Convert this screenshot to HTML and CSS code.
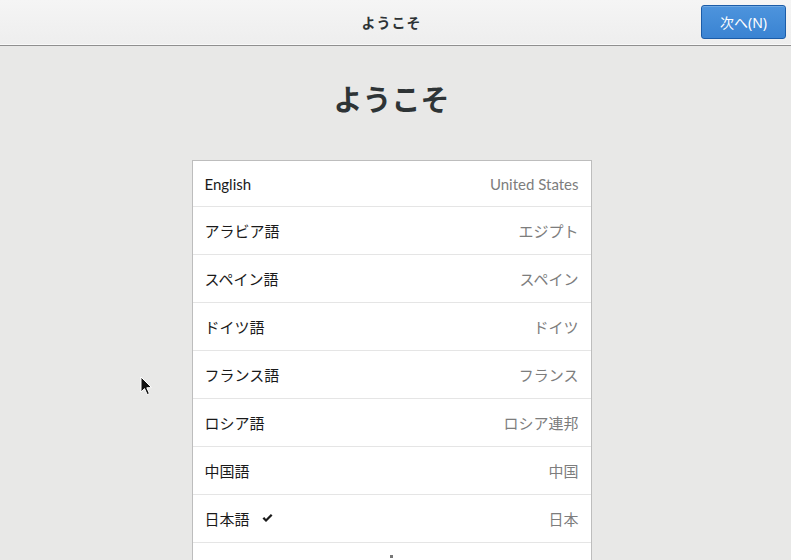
FILE: index.html
```html
<!DOCTYPE html>
<html lang="ja">
<head>
<meta charset="utf-8">
<link rel="stylesheet" href="styles.css">
</head>
<body>
<header class="topbar">
  <div class="topbar-title">ようこそ</div>
  <button class="next-btn">次へ(N)</button>
</header>
<main class="content">
  <h1 class="welcome">ようこそ</h1>
  <ul class="lang-list">
    <li class="row first"><span class="lang">English</span><span class="region">United States</span></li>
    <li class="row"><span class="lang">アラビア語</span><span class="region">エジプト</span></li>
    <li class="row"><span class="lang">スペイン語</span><span class="region">スペイン</span></li>
    <li class="row"><span class="lang">ドイツ語</span><span class="region">ドイツ</span></li>
    <li class="row"><span class="lang">フランス語</span><span class="region">フランス</span></li>
    <li class="row"><span class="lang">ロシア語</span><span class="region">ロシア連邦</span></li>
    <li class="row"><span class="lang">中国語</span><span class="region">中国</span></li>
    <li class="row"><span class="lang">日本語<svg class="check" width="11" height="9" viewBox="0 0 11 9"><path d="M0.5 4.6 L2.2 3 L4 4.9 L8.9 0 L10.5 1.6 L4 8 Z" fill="#1a1a1a"/></svg></span><span class="region">日本</span></li>
    <li class="row more"><span class="dot"></span></li>
  </ul>
</main>
<svg class="cursor" width="14" height="22" viewBox="0 0 14 22"><path d="M1 1 L1 16 L4.5 12.6 L7.2 18.6 L9.4 17.6 L6.8 11.8 L11.6 11.6 Z" fill="#111" stroke="#fff" stroke-width="1"/></svg>
</body>
</html>
```
FILE: styles.css
```css
html, body {
  margin: 0;
  padding: 0;
  height: 100%;
  overflow: hidden;
}
body {
  background: #e8e8e7;
  font-family: "Noto Sans", "Noto Sans CJK JP", sans-serif;
  color: #2e3436;
  position: relative;
}
.topbar {
  height: 44px;
  background: linear-gradient(#f5f5f5, #eeeeee);
  border-bottom: 1px solid #f9f9f9;
  box-shadow: 0 1px 0 #8f8f8f;
  display: flex;
  align-items: center;
  justify-content: center;
  padding-right: 8px;
  position: relative;
}
.topbar-title {
  font-weight: bold;
  font-size: 14px;
  letter-spacing: 1px;
  color: #2e3436;
}
.next-btn {
  position: absolute;
  right: 5px;
  top: 5px;
  width: 85px;
  height: 34px;
  border: 1px solid #1b5ca8;
  border-radius: 3px;
  background: linear-gradient(#4d94dd, #3a83d2);
  color: #ffffff;
  font-family: "Noto Sans", "Noto Sans CJK JP", sans-serif;
  font-size: 14px;
  padding: 0;
  box-shadow: inset 0 1px 0 rgba(255,255,255,0.2);
}
.content {
  display: flex;
  flex-direction: column;
  align-items: center;
  padding-right: 8px;
}
.welcome {
  margin: 33px 0 0 0;
  height: 82px;
  font-size: 29px;
  font-weight: bold;
  color: #2e3436;
  line-height: 44px;
}
.lang-list {
  list-style: none;
  margin: 0;
  padding: 0;
  width: 398px;
  background: #ffffff;
  border: 1px solid #bdbdbd;
  border-bottom: none;
  color: #1a1a1a;
  font-family: "Lato", "Noto Sans CJK JP", sans-serif;
  font-size: 15px;
}
.row {
  height: 47px;
  border-bottom: 1px solid #e5e5e5;
  display: flex;
  align-items: center;
  justify-content: space-between;
  padding: 0 12px;
}
.row.first {
  height: 45px;
}
.lang {
  display: flex;
  align-items: center;
}
.check {
  margin-left: 12px;
}
.region {
  color: #7d7d7d;
}
.row.more {
  justify-content: center;
  align-items: flex-start;
  border-bottom: none;
}
.dot {
  width: 3px;
  height: 3px;
  background: #777;
  margin-top: 12px;
}
.cursor {
  position: absolute;
  left: 140px;
  top: 376px;
}
```
